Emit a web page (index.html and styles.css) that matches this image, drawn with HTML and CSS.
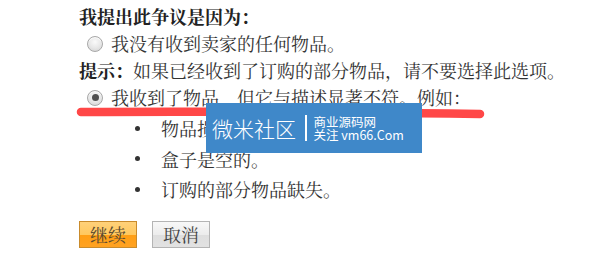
FILE: index.html
```html
<!DOCTYPE html>
<html lang="zh-CN">
<head>
<meta charset="utf-8">
<title>争议</title>
<link rel="stylesheet" href="styles.css">
</head>
<body>
<div class="page">
  <div class="line title">我提出此争议是因为：</div>
  <div class="line option"><span class="radio"></span><span>我没有收到卖家的任何物品。</span></div>
  <div class="line"><b class="strong">提示：</b>如果已经收到了订购的部分物品，请不要选择此选项。</div>
  <div class="line option"><span class="radio checked"></span><span>我收到了物品，但它与描述显著不符。例如：</span></div>
  <ul class="reasons">
    <li>物品损坏。</li>
    <li>盒子是空的。</li>
    <li>订购的部分物品缺失。</li>
  </ul>
  <div class="actions">
    <button class="btn primary">继续</button>
    <button class="btn">取消</button>
  </div>

  <svg class="mark" width="614" height="258" viewBox="0 0 614 258">
    <path d="M81 112 C 200 111, 330 112, 480 114" stroke="#ff4747" stroke-width="8.5" stroke-linecap="round" fill="none"/>
  </svg>
  <div class="watermark">
    <span class="wm-big">微米社区</span>
    <span class="wm-sep"></span>
    <span class="wm-small"><span>商业源码网</span><span>关注 vm66.Com</span></span>
  </div>
</div>
</body>
</html>
```
FILE: styles.css
```css
html, body {
  margin: 0;
  padding: 0;
  background: #fff;
}
.page {
  position: relative;
  width: 614px;
  height: 258px;
  padding: 3px 0 0 79px;
  box-sizing: border-box;
  font-family: "Noto Serif CJK SC", "Noto Sans CJK SC", "DejaVu Serif", serif;
  font-size: 18px;
  color: #333;
  overflow: hidden;
}
.line {
  height: 27px;
  line-height: 27px;
  white-space: nowrap;
}
.title, .strong {
  font-weight: bold;
  color: #222;
}
.option {
  display: flex;
  align-items: center;
  padding-left: 8px;
}
.radio {
  width: 14px;
  height: 14px;
  border: 1px solid #a8a8a8;
  border-radius: 50%;
  background: radial-gradient(circle at 50% 35%, #fafafa 0%, #e6e6e6 55%, #cfcfcf 100%);
  margin-right: 8px;
  flex: none;
  position: relative;
  box-shadow: inset 0 1px 1px rgba(255,255,255,.9);
}
.radio.checked::after {
  content: "";
  position: absolute;
  left: 3.5px;
  top: 3.5px;
  width: 7px;
  height: 7px;
  border-radius: 50%;
  background: #505050;
}
.reasons {
  list-style: none;
  margin: 2px 0 0 0;
  padding: 0 0 0 56px;
}
.reasons li {
  display: flex;
  align-items: center;
  height: 30.5px;
  line-height: 30.5px;
}
.reasons li::before {
  content: "";
  width: 5px;
  height: 5px;
  border-radius: 50%;
  background: #333;
  margin: 0 21px 0 0;
  flex: none;
}
.actions {
  display: flex;
  gap: 15px;
  margin-top: 16px;
}
.btn {
  font-family: inherit;
  font-size: 18px;
  color: #444;
  height: 27px;
  padding: 0 10px;
  line-height: 25px;
  border: 1px solid #b4b4b4;
  background: linear-gradient(#f8f8f8 0%, #ececec 50%, #dedede 51%, #e2e2e2 100%);
  border-radius: 0;
  cursor: pointer;
}
.btn.primary {
  border-color: #c98b2c;
  color: #5a4a30;
  background: linear-gradient(#ffd17a 0%, #ffc85f 50%, #ff9e14 52%, #ffa222 100%);
}
.mark {
  position: absolute;
  left: 0;
  top: 0;
  pointer-events: none;
}
.watermark {
  position: absolute;
  left: 206px;
  top: 103px;
  width: 216px;
  height: 50px;
  background: #3f88c9;
  color: #fff;
  display: flex;
  align-items: center;
  font-family: "Noto Sans CJK SC", "Noto Sans", sans-serif;
  box-sizing: border-box;
  padding-left: 6px;
}
.wm-big {
  font-size: 21px;
  font-weight: 300;
  line-height: 1;
}
.wm-sep {
  width: 1.5px;
  height: 26px;
  background: #fff;
  margin: 0 7px 0 9px;
}
.wm-small {
  display: flex;
  flex-direction: column;
  font-size: 12.5px;
  line-height: 13px;
}
```
